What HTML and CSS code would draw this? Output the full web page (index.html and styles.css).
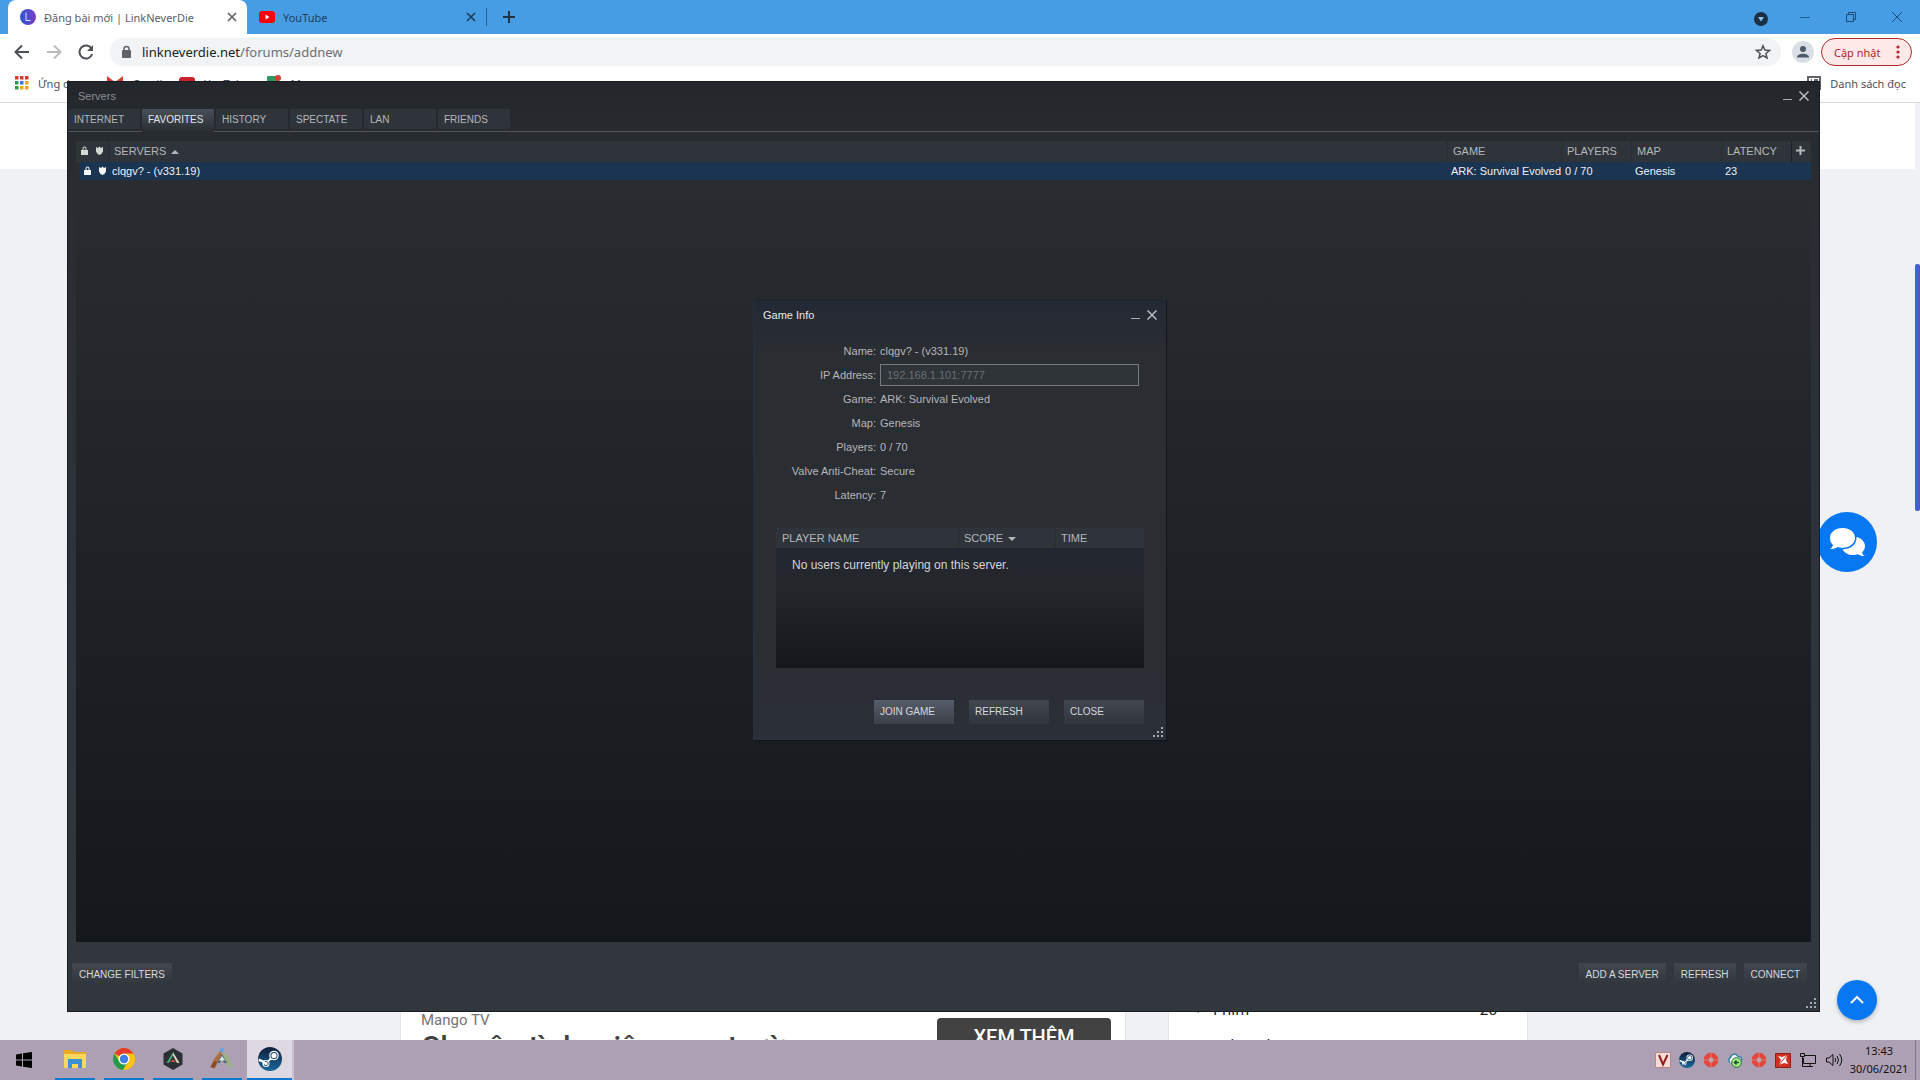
FILE: index.html
```html
<!DOCTYPE html>
<html lang="vi">
<head>
    <meta charset="UTF-8">
    <meta name="viewport" content="width=device-width, initial-scale=1.0">
    <title>Đăng bài mới | LinkNeverDie</title>
    <link rel="stylesheet" href="styles.css">
</head>
<body>
    <div class="desktop">
        <div class="browser">
            <div class="tab-strip">
                <div class="browser-tab active">
                    <svg class="favicon" width="16" height="16" viewBox="0 0 16 16"><defs><linearGradient id="lnd" x1="0" x2="1"><stop offset="0" stop-color="#2d55d8"/><stop offset="1" stop-color="#7a3fc0"/></linearGradient></defs><circle cx="8" cy="8" r="8" fill="url(#lnd)"/><path d="M6 3.500v8h4.500" stroke="#dfe3ff" fill="none"/></svg>
                    <span class="tab-title">Đăng bài mới | LinkNeverDie</span>
                    <button class="tab-close" aria-label="Đóng"><svg width="10" height="10" viewBox="0 0 10 10"><path d="M1 1l8 8M9 1L1 9" stroke="#5f6368" stroke-width="1.700"/></svg></button>
                </div>
                <div class="browser-tab">
                    <svg class="favicon" width="16" height="16" viewBox="0 0 16 16"><rect y="2" width="16" height="12" rx="3" fill="#f00"/><path d="M6.500 5.500v5l4-2.500z" fill="#fff"/></svg>
                    <span class="tab-title">YouTube</span>
                    <button class="tab-close" aria-label="Đóng"><svg width="10" height="10" viewBox="0 0 10 10"><path d="M1 1l8 8M9 1L1 9" stroke="#1d3f5c" stroke-width="1.700"/></svg></button>
                </div>
                <button class="new-tab" aria-label="Thẻ mới"><svg width="12" height="12" viewBox="0 0 12 12"><path d="M6 0v12M0 6h12" stroke="#1d3348" stroke-width="2"/></svg></button>
                <div class="window-buttons">
                    <button class="tab-search" aria-label="Tìm thẻ"><svg width="14" height="14" viewBox="0 0 14 14"><circle cx="7" cy="7" r="7" fill="#1c3043"/><path d="M4 5h6L7 9.500z" fill="#8fc4ee"/></svg></button>
                    <button aria-label="Thu nhỏ"><svg width="10" height="10" viewBox="0 0 10 10"><path d="M0 5.500h10" stroke="#1f5f96"/></svg></button>
                    <button aria-label="Khôi phục"><svg width="10" height="10" viewBox="0 0 10 10"><path d="M.5 2.500h7v7h-7zM2.500 2V.5h7v7H8" fill="none" stroke="#1b4d7a"/></svg></button>
                    <button aria-label="Đóng cửa sổ"><svg width="10" height="10" viewBox="0 0 10 10"><path d="M0 0l10 10M10 0L0 10" stroke="#1b4d7a"/></svg></button>
                </div>
            </div>

            <div class="toolbar">
                <button aria-label="Quay lại"><svg width="16" height="16" viewBox="0 0 16 16"><path d="M15 8H2M8 1.500L1.500 8 8 14.500" fill="none" stroke="#4d5156" stroke-width="2"/></svg></button>
                <button aria-label="Tiến"><svg width="16" height="16" viewBox="0 0 16 16"><path d="M1 8h13M8 1.500L14.500 8 8 14.500" fill="none" stroke="#babcbe" stroke-width="2"/></svg></button>
                <button aria-label="Tải lại"><svg width="16" height="16" viewBox="0 0 16 16"><path d="M13.500 4.500A6.500 6.500 0 1 0 14.200 10" fill="none" stroke="#4d5156" stroke-width="2"/><path d="M15 1v6H9z" fill="#4d5156"/></svg></button>
                <div class="omnibox">
                    <svg width="12" height="14" viewBox="0 0 12 14"><rect x="2" y="5" width="9" height="8" rx="1" fill="#5f6368"/><path d="M4 6V4a2.500 2.500 0 0 1 5 0v2" fill="none" stroke="#5f6368" stroke-width="1.500"/></svg>
                    <a class="url" href="#">linkneverdie.net<span>/forums/addnew</span></a>
                    <button class="star" aria-label="Dấu trang"><svg width="16" height="16" viewBox="0 0 16 16"><path d="M8 1.800l1.800 4.300 4.700.4-3.600 3 1.100 4.500L8 11.600 4 14l1.100-4.500-3.600-3 4.700-.4z" fill="none" stroke="#4d5156" stroke-width="1.500"/></svg></button>
                </div>
                <button class="avatar" aria-label="Hồ sơ"><svg width="22" height="22" viewBox="0 0 22 22"><circle cx="11" cy="11" r="11" fill="#dadfe6"/><circle cx="11" cy="8" r="3" fill="#4d5968"/><path d="M5 16.500c0-5 12-5 12 0z" fill="#4d5968"/></svg></button>
                <button class="update">Cập nhật <svg width="4" height="14" viewBox="0 0 4 14"><g fill="#b3262b"><circle cx="2" cy="2" r="1.600"/><circle cx="2" cy="7" r="1.600"/><circle cx="2" cy="12" r="1.600"/></g></svg></button>
            </div>

            <div class="bookmarks">
                <a href="#"><svg width="14" height="14" viewBox="0 0 14 14"><path d="M0 0h3.500v3.500H0zM5 0h3.500v3.500H5zM10 0h3.500v3.500H10z" fill="#d93a30"/><path d="M0 5h3.500v3.500H0z" fill="#2c9a50"/><path d="M5 5h3.500v3.500H5z" fill="#2f7be4"/><path d="M10 5h3.500v3.500H10zM5 10h3.500v3.500H5zM10 10h3.500v3.500H10z" fill="#eda81d"/><path d="M0 10h3.500v3.500H0z" fill="#2c9a50"/></svg>Ứng dụng</a>
                <a href="#"><svg width="16" height="16" viewBox="0 0 16 16"><path d="M1.500 14V4L8 9l6.500-5v10" fill="none" stroke="#d33b35" stroke-width="3"/></svg>Gmail</a>
                <a href="#"><svg width="16" height="16" viewBox="0 0 16 16"><rect y="2" width="16" height="12" rx="3" fill="#c8202c"/><path d="M6.500 5.500v5l4-2.500z" fill="#fff"/></svg>YouTube</a>
                <a href="#"><svg width="16" height="16" viewBox="0 0 16 16"><rect x="1" y="1" width="12" height="13" rx="1" fill="#2c9a60"/><circle cx="12" cy="3" r="3" fill="#db3b31"/></svg>Maps</a>
                <a class="reading-list" href="#"><svg width="14" height="14" viewBox="0 0 14 14"><path d="M1 1h12v12H1zM4 4h1M7 4h4M4 7h1M7 7h4" fill="none" stroke="#5f6368" stroke-width="2"/></svg>Danh sách đọc</a>
            </div>

            <div class="page">
                <div class="page-header"></div>
                <div class="page-content">
                    <div class="card ad">
                        <div>
                            <div class="ad-brand">Mango TV</div>
                            <h2>Chuyên tình miên man trường</h2>
                        </div>
                        <a class="ad-button" href="#">XEM THÊM</a>
                    </div>
                    <ul class="card categories">
                        <li><span class="chevron"></span>Phim <b>26</b></li>
                        <li><span class="chevron"></span>Phần mềm</li>
                    </ul>
                </div>
                <div class="scroll-track"><div class="scroll-thumb"></div></div>
                <button class="chat" aria-label="Trò chuyện"><svg width="36" height="30" viewBox="0 0 36 30"><path d="M13.500 1C6 1 1 5.500 1 11c0 3 1 5 3 7-.5 2-1.500 3-3 4 3 0 5.500-.5 7.500-2 1.500.5 3 .8 5 .8 7.500 0 12.500-4.500 12.500-10S21 1 13.500 1z" fill="#fff"/><path d="M27.500 10c.5 7-5 12-14 12.500 2 3.500 6 5.500 10.500 5.500 2 0 3.500-.3 5-.8 2 1.300 4 1.800 6.500 1.800-1.500-1-2-2.500-2.500-3.500 2-1.700 3-4 3-6.500 0-4-3.500-8-8.500-9z" fill="#fff"/></svg></button>
                <button class="to-top" aria-label="Lên đầu trang"><svg width="16" height="10" viewBox="0 0 16 10"><path d="M2 8l6-6 6 6" fill="none" stroke="#fff" stroke-width="2"/></svg></button>
            </div>
        </div>

        <div class="taskbar">
            <button class="task start" aria-label="Start"><svg width="16" height="16" viewBox="0 0 16 16"><path d="M0 2.500L6 1.500v6H0zM7 1.300L16 0v7.500H7zM0 8.500h6v6l-6-1zM7 8.500h9V16l-9-1.300z"/></svg></button>
            <button class="task open" aria-label="File Explorer"><svg width="24" height="24" viewBox="0 0 24 24"><path d="M1 3h8l2 2h12v16H1z" fill="#e9a825"/><path d="M1 7h22v14H1z" fill="#fbd75f"/><path d="M5 21v-9h14v9h-4v-4H9v4z" fill="#3a92d3"/></svg></button>
            <button class="task open" aria-label="Chrome"><svg width="24" height="24" viewBox="0 0 24 24"><circle cx="12" cy="12" r="11" fill="#fbc413"/><path d="M12 12L2.500 6.500A11 11 0 0 1 21.500 6.500H12z" fill="#e33b2e"/><path d="M2.500 6.500A11 11 0 0 0 11 23l4.500-8.500-8.200 0z" fill="#22994c"/><circle cx="12" cy="12" r="5.500" fill="#fff"/><circle cx="12" cy="12" r="4.200" fill="#3e80e8"/></svg></button>
            <button class="task open" aria-label="ARK Server Manager"><svg width="24" height="24" viewBox="0 0 24 24"><path d="M12 1l9.500 5.500v11L12 23l-9.500-5.500v-11z" fill="#2b3034"/><path d="M12 5L5.500 16H8l4-7.500z" fill="#4aa37c"/><path d="M12 5l6.500 11H16l-4-7.500z" fill="#d9d2b8"/><path d="M9 15l3-2.500 3 2.500z" fill="#c1513c"/></svg></button>
            <button class="task open" aria-label="ARK"><svg width="24" height="24" viewBox="0 0 24 24"><path d="M11 3L4 12l-3.500 8 4 1.500L12 9z" fill="#a9713f"/><path d="M13 3l7 9 3.500 8-4.500 1L12 9z" fill="#9bb08c"/><path d="M4 14l3 1-2.500 6-4-1z" fill="#8a4d2c"/><path d="M12 7l-5 9h3l2-4 2 4h3z" fill="#566672"/><path d="M9 13.500h6L12 9z" fill="#dbe6ea"/><circle cx="12" cy="3" r="2" fill="#58a8e8"/></svg></button>
            <button class="task open current" aria-label="Steam"><svg width="24" height="24" viewBox="0 0 24 24"><use href="#steam"/></svg></button>
            <div class="tray">
                <svg width="16" height="16" viewBox="0 0 16 16"><path d="M.5.5h15v15H.5z" fill="#f8dcd8" stroke="#b88888"/><path d="M4 3l4 9.500L12.500 3" fill="none" stroke="#8f1f1c" stroke-width="2"/></svg>
                <svg width="16" height="16" viewBox="0 0 24 24"><defs><linearGradient id="steam-bg" x2="0" y2="1"><stop stop-color="#101e3c"/><stop offset="1" stop-color="#17699c"/></linearGradient></defs><g id="steam"><circle cx="12" cy="12" r="12" fill="url(#steam-bg)"/><path d="M.5 14l7 2.800L13 13l5-3-3-4-6 9-8-3.500z" fill="#fff"/><circle cx="16" cy="8.500" r="4.800" fill="#fff"/><circle cx="16" cy="8.500" r="3.600" fill="#173f66"/><circle cx="16" cy="8.500" r="2.600" fill="#fff"/><circle cx="8" cy="16.500" r="3.500" fill="#fff"/><path d="M6 17.500a2.200 2.200 0 1 0 1-3" fill="none" stroke="#173f66"/></g></svg>
                <svg width="16" height="16" viewBox="0 0 16 16"><g id="red-cross"><path d="M5 1h6l4 4v6l-4 4H5l-4-4V5z" fill="#e2463c"/><path d="M8 0v6M8 10v6M0 8h5M11 8h5" stroke="#c9857f"/><circle cx="8" cy="8" r="2.500" fill="#bfa3ae"/></g></svg>
                <svg width="16" height="16" viewBox="0 0 16 16"><path d="M3 10.500a3 3 0 0 1 .5-5A4 4 0 0 1 11 4.500a3 3 0 0 1 3.500 4" fill="#fff" stroke="#2f7fa8" stroke-width="1.500"/><circle cx="9.500" cy="10.500" r="4.800" fill="#a5ef8c" stroke="#27662b"/><path d="M12 10.500H7.500m2-2l-2 2 2 2" fill="none" stroke="#174d20" stroke-width="1.500"/></svg>
                <svg width="16" height="16" viewBox="0 0 16 16"><use href="#red-cross"/></svg>
                <svg width="16" height="16" viewBox="0 0 16 16"><path d="M.5 1.500h15v14H.5z" fill="#d12f21" stroke="#8f1e17"/><path d="M3 4l4 1 5-2-1 5 2 4-4-1-5 2 2-5z" fill="#fff"/><path d="M4 13l8-10" stroke="#d12f21"/></svg>
                <svg width="18" height="16" viewBox="0 0 18 16"><path d="M6 3.500h10.500v8H4.500V6M8 14.500h6M11 12v2.500M1.500 1.500h4v3h-4zM3.500 5v9.500H8" fill="none" stroke="#111"/></svg>
                <svg width="18" height="16" viewBox="0 0 18 16"><path d="M1.500 6v4h2.500l4 3.500v-11L4 6zM10 6q1.500 2 0 4M12 4q3 4 0 8M14.500 2q4.500 6 0 12" fill="none" stroke="#111"/></svg>
            </div>
            <div class="clock"><span>13:43</span><span>30/06/2021</span></div>
            <div class="show-desktop"></div>
        </div>

        <div class="steam-window servers">
            <div class="title-bar">
                <span>Servers</span>
                <button aria-label="Minimize"><svg width="9" height="9" viewBox="0 0 9 9"><path d="M0 8.500h9" stroke="#a9adb2"/></svg></button>
                <button aria-label="Close"><svg width="10" height="10" viewBox="0 0 10 10"><path d="M.5.5l9 9M9.500.5l-9 9" stroke="#b9bdc2" stroke-width="1.500"/></svg></button>
            </div>
            <div class="tabs">
                <button>INTERNET</button>
                <button class="selected">FAVORITES</button>
                <button>HISTORY</button>
                <button>SPECTATE</button>
                <button>LAN</button>
                <button>FRIENDS</button>
            </div>
            <div class="server-list">
                <table>
                    <thead>
                        <tr>
                            <th class="col-icons"><svg width="24" height="10" viewBox="0 0 24 10"><g id="row-icons"><path d="M1 4h7v5H1zM2.500 4V2.500a2 2 0 0 1 4 0V4h-1V2.500a1 1 0 0 0-2 0V4z"/><path d="M16 1l2 1 1.500-1.500L21 2l2-1v4.500Q22 8 19.500 9 17 8 16 5.500z"/></g></svg></th>
                            <th>SERVERS <span class="sort up"></span></th>
                            <th class="col-game">GAME</th>
                            <th class="col-players">PLAYERS</th>
                            <th class="col-map">MAP</th>
                            <th class="col-latency">LATENCY</th>
                            <th class="col-add"><button aria-label="Add column"><svg width="9" height="9" viewBox="0 0 9 9"><path d="M4.500 0v9M0 4.500h9" stroke="#b4b7ba" stroke-width="2"/></svg></button></th>
                        </tr>
                    </thead>
                    <tbody>
                        <tr>
                            <td class="col-icons"><svg width="24" height="10" viewBox="0 0 24 10"><use href="#row-icons"/></svg></td>
                            <td>clqgv? - (v331.19)</td>
                            <td>ARK: Survival Evolved</td>
                            <td>0 / 70</td>
                            <td>Genesis</td>
                            <td>23</td>
                            <td></td>
                        </tr>
                    </tbody>
                </table>
            </div>
            <div class="footer">
                <button class="push">CHANGE FILTERS</button>
                <button class="push">ADD A SERVER</button>
                <button class="push">REFRESH</button>
                <button class="push">CONNECT</button>
            </div>
            <svg class="grip" width="10" height="10" viewBox="0 0 10 10"><path id="dots" d="M8 0h2v2H8zM8 4h2v2H8zM4 4h2v2H4zM8 8h2v2H8zM4 8h2v2H4zM0 8h2v2H0z" fill="#a5a9ad"/></svg>
        </div>

        <div class="dialog-layer">
            <div class="steam-window game-info">
                <div class="title-bar">
                    <span>Game Info</span>
                    <button aria-label="Minimize"><svg width="9" height="9" viewBox="0 0 9 9"><path d="M0 8.500h9" stroke="#a9adb2"/></svg></button>
                    <button aria-label="Close"><svg width="10" height="10" viewBox="0 0 10 10"><path d="M.5.5l9 9M9.500.5l-9 9" stroke="#b9bdc2" stroke-width="1.500"/></svg></button>
                </div>
                <div class="info">
                    <span>Name:</span><span>clqgv? - (v331.19)</span>
                    <label for="ip">IP Address:</label><input id="ip" type="text" value="192.168.1.101:7777" readonly>
                    <span>Game:</span><span>ARK: Survival Evolved</span>
                    <span>Map:</span><span>Genesis</span>
                    <span>Players:</span><span>0 / 70</span>
                    <span>Valve Anti-Cheat:</span><span>Secure</span>
                    <span>Latency:</span><span>7</span>
                </div>
                <div class="player-list">
                    <table>
                        <thead>
                            <tr><th>PLAYER NAME</th><th class="col-score">SCORE <span class="sort down"></span></th><th class="col-time">TIME</th></tr>
                        </thead>
                        <tbody>
                            <tr><td colspan="3">No users currently playing on this server.</td></tr>
                        </tbody>
                    </table>
                </div>
                <div class="actions">
                    <button class="push primary">JOIN GAME</button>
                    <button class="push">REFRESH</button>
                    <button class="push">CLOSE</button>
                </div>
                <svg class="grip" width="10" height="10" viewBox="0 0 10 10"><use href="#dots"/></svg>
            </div>
        </div>
    </div>
</body>
</html>
```
FILE: styles.css
```css
* {
    box-sizing: border-box;
}
body {
    margin: 0;
    font-family: "Noto Sans", "Open Sans", sans-serif;
    font-size: 11px;
}
button {
    font: inherit;
    color: inherit;
    background: none;
    border: 0;
    padding: 0;
}
a {
    color: inherit;
    text-decoration: none;
}
svg {
    display: block;
    flex-shrink: 0;
}
.desktop {
    position: relative;
    height: 100vh;
    display: flex;
    flex-direction: column;
    overflow: hidden;
}
.browser {
    flex: 1;
    min-height: 0;
    display: flex;
    flex-direction: column;
    background: white;
}

/* chrome */
.tab-strip {
    display: flex;
    align-items: center;
    height: 34px;
    padding-left: 8px;
    background: #479de3;
}
.browser-tab {
    display: flex;
    align-items: center;
    width: 239px;
    height: 34px;
    padding: 0 10px 0 12px;
    color: #1d3f5c;
}
.browser-tab.active {
    background: white;
    border-radius: 8px 8px 0 0;
    color: #5a5e63;
}
.tab-title {
    flex: 1;
    margin-left: 8px;
    white-space: nowrap;
}
.new-tab {
    padding: 3px 16px;
    border-left: 1px solid #2a5f8b;
}
.window-buttons {
    display: flex;
    align-items: center;
    gap: 36px;
    height: 28px;
    margin-left: auto;
    padding-right: 18px;
}
.tab-search {
    margin-right: -4px;
    padding-top: 4px;
}
.toolbar {
    display: flex;
    align-items: center;
    gap: 16px;
    height: 36px;
    padding: 0 8px 0 14px;
}
.omnibox {
    flex: 1;
    display: flex;
    align-items: center;
    height: 28px;
    padding: 0 10px;
    border-radius: 14px;
    background: #f1f3f4;
}
.url {
    flex: 1;
    margin-left: 10px;
    font-size: 13px;
    color: #202124;
}
.url span {
    color: #6b6f74;
}
.toolbar .avatar {
    margin: 0 -9px 0 -5px;
}
.update {
    display: flex;
    align-items: center;
    justify-content: space-between;
    width: 91px;
    height: 28px;
    padding: 0 11px 0 12px;
    border: 1px solid #b3262b;
    border-radius: 14px;
    background: #fce9e8;
    color: #b3262b;
}
.bookmarks {
    display: flex;
    align-items: center;
    gap: 17px;
    height: 33px;
    padding: 0 14px 6px 15px;
    border-bottom: 1px solid #d8dadd;
    color: #4d5156;
}
.bookmarks a {
    display: flex;
    align-items: center;
    gap: 9px;
}
.bookmarks .reading-list {
    margin-left: auto;
}

/* forum page */
.page {
    position: relative;
    flex: 1;
    min-height: 0;
    display: flex;
    flex-direction: column;
    justify-content: space-between;
    background: #eff1f5;
}
.page-header {
    height: 66px;
    margin-right: 5px;
    background: white;
}
.page-content {
    display: flex;
    justify-content: center;
    gap: 42px;
    height: 60px;
    padding-left: 8px;
    overflow: hidden;
}
.card {
    height: 200px;
    margin: 0;
    border: 1px solid #e3e5ea;
    background: white;
}
.ad {
    display: flex;
    justify-content: space-between;
    align-items: flex-start;
    width: 726px;
    padding: 29px 14px 0 20px;
    font-family: Roboto, sans-serif;
}
.ad-brand {
    font-size: 15px;
    line-height: 20px;
    color: #757575;
}
.ad h2 {
    margin: 0;
    font-size: 30px;
    line-height: 34px;
    font-weight: 500;
    color: #424242;
}
.ad-button {
    width: 174px;
    margin-top: 8px;
    border-radius: 4px;
    background: #424242;
    color: white;
    font-size: 20px;
    font-weight: 500;
    line-height: 38px;
    text-align: center;
}
.categories {
    width: 360px;
    padding: 10px 30px 10px 26px;
    list-style: none;
    font-size: 15px;
    line-height: 36px;
    color: #222;
}
.categories li {
    display: flex;
    align-items: center;
}
.categories b {
    margin-left: auto;
    font-weight: 400;
}
.chevron {
    width: 6px;
    height: 6px;
    margin-right: 12px;
    border: solid #888;
    border-width: 1px 1px 0 0;
    transform: rotate(45deg);
}
.scroll-track {
    position: absolute;
    top: 0;
    right: 0;
    bottom: 0;
    width: 5px;
    padding-top: 161px;
}
.scroll-thumb {
    height: 247px;
    border-radius: 2px;
    background: linear-gradient(to right, #2f6fd0, #5a4fd0);
}
.chat,
.to-top {
    position: absolute;
    display: flex;
    align-items: center;
    justify-content: center;
    border-radius: 50%;
    background: #0877f2;
}
.chat {
    right: 43px;
    bottom: 468px;
    width: 60px;
    height: 60px;
}
.to-top {
    right: 43px;
    bottom: 20px;
    width: 40px;
    height: 40px;
    box-shadow: 0 2px 4px rgba(0, 0, 0, 0.25);
}

/* taskbar */
.taskbar {
    display: flex;
    align-items: center;
    height: 40px;
    background: #ada0b5;
}
.task {
    display: flex;
    align-items: center;
    justify-content: center;
    width: 40px;
    height: 40px;
    margin-right: 9px;
}
.task.start {
    width: 48px;
    margin-right: 7px;
}
.task.open {
    border-bottom: 2px solid #0d78cf;
}
.task.current {
    width: 45px;
    margin-left: -4px;
    background: #ded8e2;
    box-shadow: 2px 0 0 #c9c0d0;
}
.tray {
    display: flex;
    align-items: center;
    gap: 8px;
    margin-left: auto;
}
.clock {
    display: flex;
    flex-direction: column;
    align-items: center;
    width: 72px;
    line-height: 18px;
    color: #111;
}
.show-desktop {
    width: 5px;
    height: 40px;
    border-left: 1px solid #81778a;
}

/* steam */
.steam-window {
    display: flex;
    flex-direction: column;
    font-family: "Liberation Sans", Arial, sans-serif;
    font-size: 11px;
    color: #b4b7bb;
}
.servers {
    position: absolute;
    top: 81px;
    right: 100px;
    bottom: 68px;
    left: 67px;
    border: 1px solid #181d25;
    background: linear-gradient(#23262b, #282c31 60px, #2e323a 50%, #32373e);
}
.title-bar {
    display: flex;
    align-items: center;
    gap: 7px;
    height: 27px;
    padding: 0 10px;
}
.title-bar span {
    flex: 1;
}
.servers .title-bar {
    color: #8b8f95;
}
.tabs {
    display: flex;
    gap: 2px;
    height: 23px;
    border-bottom: 1px solid #51565c;
}
.tabs button {
    width: 72px;
    height: 20px;
    padding-left: 6px;
    background: #2f343a;
    font-size: 10px;
    text-align: left;
}
.tabs .selected {
    height: 23px;
    padding-bottom: 3px;
    background: linear-gradient(#484f59, #292d32);
    color: #e3e5e8;
}
.server-list {
    flex: 1;
    margin: 9px 8px 0;
    background: linear-gradient(#2a2d32, #14171b);
}
table {
    width: 100%;
    border-collapse: collapse;
    table-layout: fixed;
}
th,
td {
    padding: 0;
    font-weight: normal;
    text-align: left;
    white-space: nowrap;
}
th + th {
    box-shadow: inset 1px 0 0 #292d32;
}
.server-list th {
    height: 21px;
    padding: 0 0 2px 6px;
    background: #2f343a;
}
.server-list td {
    height: 18px;
    padding-left: 4px;
    background: #1a3451;
    color: #eef1f5;
}
.server-list .col-icons {
    width: 32px;
    padding-left: 4px;
    fill: #d3d8d3;
}
.server-list td.col-icons {
    padding-left: 7px;
    background: linear-gradient(to right, #2a2d32 4px, #1a3451 4px);
    fill: #f3f6f9;
}
.col-game {
    width: 114px;
}
.col-players {
    width: 70px;
}
.col-map {
    width: 90px;
}
.col-latency {
    width: 70px;
}
.col-add {
    width: 20px;
}
.server-list .col-add {
    padding-left: 5px;
    box-shadow: inset 1px 0 0 #1e2226;
}
.sort {
    display: inline-block;
    margin-left: 2px;
    border: solid transparent;
    border-width: 0 4px;
    vertical-align: middle;
}
.sort.up {
    border-bottom: 4px solid #b4b7ba;
}
.sort.down {
    border-top: 4px solid #b4b7ba;
}
.footer {
    display: flex;
    gap: 8px;
    height: 69px;
    padding: 21px 12px 0 4px;
}
.push {
    height: 22px;
    padding: 0 7px;
    background: linear-gradient(#414650, #31363d);
    color: #d5dade;
    font-size: 10px;
    text-align: left;
}
.footer .push:first-child {
    margin-right: auto;
}
.grip {
    position: absolute;
    right: 3px;
    bottom: 3px;
}
.dialog-layer {
    position: absolute;
    inset: 0 0 40px;
    display: flex;
    align-items: center;
    justify-content: center;
}
.game-info {
    position: relative;
    width: 414px;
    border: 1px solid #11151b;
    border-left-color: #26313f;
    border-top-color: #1b2430;
    background: linear-gradient(#232935, #2a2d32 50px, #2a2d32 80%, #2b2f37);
}
.game-info .title-bar {
    height: 28px;
    padding: 0 9px;
    color: #e6e8eb;
}
.info {
    display: grid;
    grid-template-columns: 122px 1fr;
    grid-auto-rows: 24px;
    align-items: center;
    column-gap: 4px;
    padding: 10px 27px 0 0;
}
.info > :nth-child(odd) {
    text-align: right;
}
.info input {
    width: 100%;
    height: 22px;
    padding: 0 6px;
    border: 1px solid #777b7e;
    background: #2e3438;
    color: #6c7073;
    font: inherit;
}
.player-list {
    height: 140px;
    margin: 21px 22px 0;
    background: linear-gradient(#222630 20px, #24272b 40%, #14171b);
}
.player-list th {
    height: 20px;
    padding-left: 6px;
    background: #2f343a;
}
.player-list td {
    padding: 10px 16px;
    font-size: 12px;
    color: #d3d6da;
}
.player-list .col-score {
    width: 97px;
}
.player-list .col-time {
    width: 89px;
}
.actions {
    display: flex;
    justify-content: flex-end;
    gap: 15px;
    padding: 32px 22px 16px;
}
.actions .push {
    width: 80px;
    height: 24px;
    padding-left: 6px;
}
.actions .primary {
    background: linear-gradient(#565d6b, #3b4049);
}
```
